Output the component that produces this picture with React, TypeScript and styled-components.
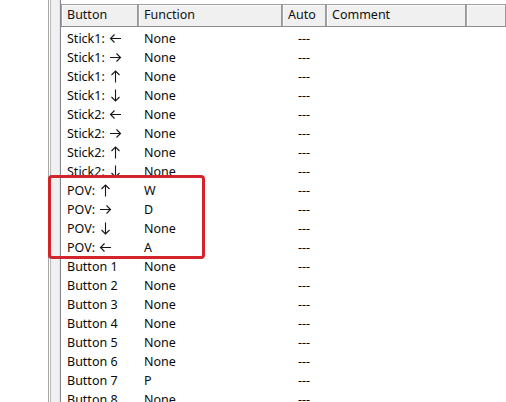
import React from "react";
import styled, { createGlobalStyle } from "styled-components";

const Global = createGlobalStyle`
  html, body { margin: 0; padding: 0; background: #ffffff; }
  body { width: 506px; height: 402px; overflow: hidden; font-family: "Segoe UI", "Noto Sans", "DejaVu Sans", sans-serif; }
`;

const Page = styled.div`
  position: relative;
  display: flex;
  width: 506px;
  height: 402px;
  overflow: hidden;
  background: #ffffff;
`;

const Blank = styled.div`
  width: 48px;
  flex: none;
  background: #ffffff;
`;

const Frame = styled.div`
  width: 10px;
  flex: none;
  background: #f0f0f0;
  border-left: 1px solid #a6a6a6;
  box-shadow: inset 1px 0 0 #ffffff, inset 2px 0 0 #b9b9b9;
  border-right: 1px solid #e3e3e3;
`;

const ListView = styled.div`
  flex: 1;
  display: flex;
  flex-direction: column;
  border-left: 1px solid #828790;
  padding-top: 4px;
  background: #ffffff;
  color: #0a0a0a;
`;

const Header = styled.div`
  display: flex;
  height: 23px;
  flex: none;
  background: #f0f0f0;
  border-top: 1px solid #a0a0a0;
  border-bottom: 1px solid #8c8c8c;
  box-sizing: border-box;
`;

const HeadCell = styled.div<{ $w?: number }>`
  ${(p) => (p.$w ? `width: ${p.$w}px; flex: none;` : `flex: 1;`)}
  box-sizing: border-box;
  border-left: 1px solid #a0a0a0;
  border-right: 1px solid #9a9a9a;
  box-shadow: inset 1px 1px 0 #fbfbfb;
  padding-left: 5px;
  display: flex;
  align-items: center;
  line-height: 1;
  font-size: 12.5px;
  color: #111;
`;

const Body = styled.div`
  display: flex;
  flex-direction: column;
  padding-top: 2px;
`;

const Row = styled.div`
  display: flex;
  height: 19px;
  align-items: center;
`;

const Cell = styled.div<{ $w: number; $center?: boolean }>`
  width: ${(p) => p.$w}px;
  flex: none;
  display: flex;
  align-items: center;
  justify-content: ${(p) => (p.$center ? "center" : "flex-start")};
  box-sizing: border-box;
  padding-left: ${(p) => (p.$center ? 0 : 6)}px;
  white-space: nowrap;
  line-height: 19px;
  height: 19px;
  font-size: 12.5px;
`;

const ArrowSvg = styled.svg`
  width: 13px;
  height: 13px;
  margin-left: 4px;
  flex: none;
  overflow: visible;
`;

const arrowPaths: Record<string, string> = {
  left: "M1.5 6.5 H12 M5.5 2.5 L1.5 6.5 L5.5 10.5",
  right: "M1 6.5 H11.5 M7.5 2.5 L11.5 6.5 L7.5 10.5",
  up: "M6.5 1 V12.5 M2.5 5 L6.5 1 L10.5 5",
  down: "M6.5 0.5 V12 M2.5 8 L6.5 12 L10.5 8",
};

function Arrow({ dir }: { dir: string }) {
  return (
    <ArrowSvg viewBox="0 0 13 13">
      <path d={arrowPaths[dir]} fill="none" stroke="#161616" strokeWidth={1.1} />
    </ArrowSvg>
  );
}

const Highlight = styled.div`
  position: absolute;
  left: 48px;
  top: 175px;
  width: 157px;
  height: 84px;
  box-sizing: border-box;
  border: 3px solid #d4242b;
  border-radius: 4px;
  pointer-events: none;
`;

const W = [77, 144, 44, 140];

const rows: [string, string | null, string][] = [
  ["Stick1:", "left", "None"],
  ["Stick1:", "right", "None"],
  ["Stick1:", "up", "None"],
  ["Stick1:", "down", "None"],
  ["Stick2:", "left", "None"],
  ["Stick2:", "right", "None"],
  ["Stick2:", "up", "None"],
  ["Stick2:", "down", "None"],
  ["POV:", "up", "W"],
  ["POV:", "right", "D"],
  ["POV:", "down", "None"],
  ["POV:", "left", "A"],
  ["Button 1", null, "None"],
  ["Button 2", null, "None"],
  ["Button 3", null, "None"],
  ["Button 4", null, "None"],
  ["Button 5", null, "None"],
  ["Button 6", null, "None"],
  ["Button 7", null, "P"],
  ["Button 8", null, "None"],
];

export default function App() {
  return (
    <>
      <Global />
      <Page>
        <Blank />
        <Frame />
        <ListView>
          <Header>
            <HeadCell $w={W[0]}>Button</HeadCell>
            <HeadCell $w={W[1]}>Function</HeadCell>
            <HeadCell $w={W[2]}>Auto</HeadCell>
            <HeadCell $w={W[3]}>Comment</HeadCell>
            <HeadCell />
          </Header>
          <Body>
            {rows.map(([name, arrow, fn], i) => (
              <Row key={i}>
                <Cell $w={W[0]}>
                  {name}
                  {arrow && <Arrow dir={arrow} />}
                </Cell>
                <Cell $w={W[1]}>{fn}</Cell>
                <Cell $w={W[2]} $center>
                  ---
                </Cell>
                <Cell $w={W[3]} />
              </Row>
            ))}
          </Body>
        </ListView>
        <Highlight />
      </Page>
    </>
  );
}
